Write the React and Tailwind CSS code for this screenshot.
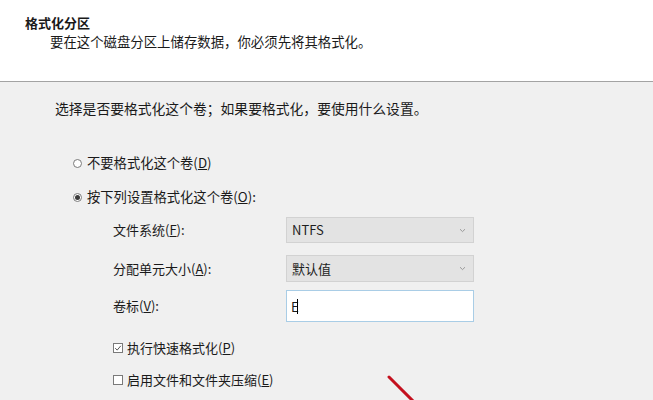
import React from "react";

const font = { fontFamily: '"Microsoft YaHei","Noto Sans CJK SC","Noto Sans",sans-serif' };

function Chevron() {
  return (
    <svg width="7" height="5" viewBox="0 0 7 5" className="shrink-0">
      <path d="M1 1.2 L3.5 3.6 L6 1.2" fill="none" stroke="#9a9a9a" strokeWidth="1" />
    </svg>
  );
}

function Radio({ checked }) {
  return (
    <span className="w-[9px] h-[9px] rounded-full border border-[#7a7a7a] bg-white flex items-center justify-center shrink-0">
      {checked && <span className="w-[5px] h-[5px] rounded-full bg-[#3a3a3a]" />}
    </span>
  );
}

function Check({ checked }) {
  return (
    <span className="w-[10px] h-[10px] border border-[#7a7a7a] bg-white flex items-center justify-center shrink-0">
      {checked && (
        <svg width="8" height="8" viewBox="0 0 8 8">
          <path d="M1.2 4.2 L3.2 6.1 L6.8 1.8" fill="none" stroke="#555" strokeWidth="1" />
        </svg>
      )}
    </span>
  );
}

function Select({ value, h }) {
  return (
    <div className={`w-[188px] ${h} bg-[#e3e3e3] border border-[#d2d2d2] flex items-center justify-between pl-[5px] pr-[7px]`}>
      <span className="text-[13px] text-[#1e1e1e]">{value}</span>
      <Chevron />
    </div>
  );
}

export default function App() {
  return (
    <div className="w-[653px] h-[400px] bg-[#f0f0f0] relative overflow-hidden text-[#1a1a1a]" style={font}>
      <div className="h-[82px] bg-white border-b border-[#a3a3a3] pt-[14px] pl-[25px]">
        <div className="text-[13px] font-bold leading-[17px]">格式化分区</div>
        <div className="text-[13.4px] leading-[17px] pl-[25px] mt-[2px]">要在这个磁盘分区上储存数据，你必须先将其格式化。</div>
      </div>
      <div className="flex flex-col">
        <div className="h-[52px] flex items-center pl-[55px] text-[13.8px]">选择是否要格式化这个卷；如果要格式化，要使用什么设置。</div>
        <div className="h-[34px] mt-[12px] flex items-center gap-[5px] pl-[73px] text-[13.3px]">
          <Radio />
          <span>不要格式化这个卷(<span className="underline">D</span>)</span>
        </div>
        <div className="h-[34px] flex items-center gap-[5px] pl-[73px] text-[13.3px]">
          <Radio checked />
          <span>按下列设置格式化这个卷(<span className="underline">O</span>):</span>
        </div>
        <div className="flex flex-col pl-[113px] mt-[3px] text-[13px]">
          <div className="flex items-center h-[26px]">
            <span className="w-[173px]">文件系统(<span className="underline">F</span>):</span>
            <Select value="NTFS" h="h-[26px]" />
          </div>
          <div className="flex items-center h-[27px] mt-[12px]">
            <span className="w-[173px]">分配单元大小(<span className="underline">A</span>):</span>
            <Select value="默认值" h="h-[27px]" />
          </div>
          <div className="flex items-center h-[32px] mt-[8px]">
            <span className="w-[173px]">卷标(<span className="underline">V</span>):</span>
            <div className="w-[188px] h-[32px] bg-white border border-[#a9cde6] flex items-center pl-[4px]">
              <span className="text-[13px] leading-none">E</span>
              <span className="w-[1px] h-[15px] bg-black ml-[-2px]" />
            </div>
          </div>
        </div>
        <div className="h-[32px] mt-[10px] flex items-center gap-[4px] pl-[113px] text-[13px]">
          <Check checked />
          <span>执行快速格式化(<span className="underline">P</span>)</span>
        </div>
        <div className="h-[32px] flex items-center gap-[4px] pl-[113px] text-[13px]">
          <Check />
          <span>启用文件和文件夹压缩(<span className="underline">E</span>)</span>
        </div>
      </div>
      <svg className="absolute left-0 top-0 pointer-events-none" width="653" height="400">
        <line x1="389" y1="377" x2="416" y2="404" stroke="#c4101e" strokeWidth="3" strokeLinecap="round" />
      </svg>
    </div>
  );
}
